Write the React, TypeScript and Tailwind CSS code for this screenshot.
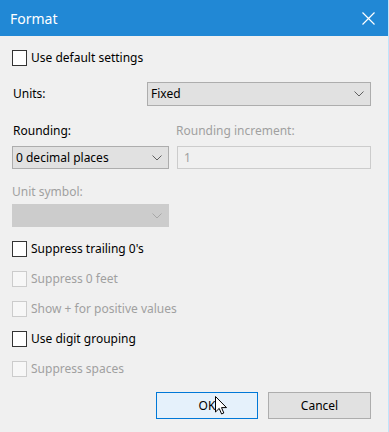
import React from "react";

const font = { fontFamily: '"Noto Sans", "Liberation Sans", sans-serif' };

function Check({ label, disabled }: { label: string; disabled?: boolean }) {
  return (
    <div className="flex items-center h-[16px]">
      <div
        className={
          "w-[15px] h-[16px] border shrink-0 " +
          (disabled ? "border-[#cccccc] bg-[#f7f7f7]" : "border-[#333333] bg-white")
        }
      />
      <span className={"ml-[4px] text-[12px] leading-[16px] " + (disabled ? "text-[#a0a0a0]" : "text-black")}>
        {label}
      </span>
    </div>
  );
}

function Chevron({ color }: { color: string }) {
  return (
    <svg width="10" height="6" viewBox="0 0 10 6" className="shrink-0">
      <path d="M0.5 0.5 L5 5 L9.5 0.5" fill="none" stroke={color} strokeWidth="1" />
    </svg>
  );
}

export default function App() {
  return (
    <div className="w-[389px] h-[432px] bg-[#f0f0f0] flex flex-col relative overflow-hidden border-r border-[#bfe3fb]" style={font}>
      <div className="h-[36px] bg-[#2188d5] flex items-center justify-between pl-[10px] pr-[13px] shrink-0">
        <span className="text-white text-[14px]">Format</span>
        <svg width="13" height="13" viewBox="0 0 13 13">
          <path d="M0.5 0.5 L12.5 12.5 M12.5 0.5 L0.5 12.5" stroke="white" strokeWidth="1.2" />
        </svg>
      </div>
      <div className="pl-[12px] pr-[17px] flex flex-col">
        <div className="mt-[14px]">
          <Check label="Use default settings" />
        </div>
        <div className="mt-[16px] flex items-center h-[24px]">
          <span className="text-[12px] text-black w-[135px] pl-[1px]">Units:</span>
          <div className="flex-1 h-[24px] bg-[#e1e1e1] border border-[#adadad] flex items-center justify-between pl-[3px] pr-[6px]">
            <span className="text-[12px] text-black">Fixed</span>
            <Chevron color="#606060" />
          </div>
        </div>
        <div className="mt-[17px] flex h-[16px] items-center">
          <span className="text-[12px] text-black w-[164px] pl-[1px]">Rounding:</span>
          <span className="text-[12px] text-[#a0a0a0]">Rounding increment:</span>
        </div>
        <div className="mt-[7px] flex h-[23px]">
          <div className="w-[157px] h-[23px] bg-[#e1e1e1] border border-[#adadad] flex items-center justify-between pl-[3px] pr-[6px]">
            <span className="text-[12px] text-black">0 decimal places</span>
            <Chevron color="#606060" />
          </div>
          <div className="ml-[8px] flex-1 h-[23px] border border-[#cccccc] bg-[#f0f0f0] flex items-center pl-[6px]">
            <span className="text-[12px] text-[#a0a0a0]">1</span>
          </div>
        </div>
        <div className="mt-[15px] h-[16px] flex items-center">
          <span className="text-[12px] text-[#a0a0a0]">Unit symbol:</span>
        </div>
        <div className="mt-[4px] w-[157px] h-[23px] bg-[#cccccc] border border-[#cccccc] flex items-center justify-end pr-[6px]">
          <Chevron color="#a8a8a8" />
        </div>
        <div className="mt-[14px] flex flex-col gap-[14px]">
          <Check label="Suppress trailing 0's" />
          <Check label="Suppress 0 feet" disabled />
          <Check label="Show + for positive values" disabled />
          <Check label="Use digit grouping" />
          <Check label="Suppress spaces" disabled />
        </div>
        <div className="mt-[15px] flex justify-end gap-[10px]">
          <div className="w-[102px] h-[27px] bg-[#e5f1fb] border border-[#0078d7] flex items-center justify-center text-[12px] text-black">
            OK
          </div>
          <div className="w-[103px] h-[27px] bg-[#e1e1e1] border border-[#adadad] flex items-center justify-center text-[12px] text-black">
            Cancel
          </div>
        </div>
      </div>
      <svg className="absolute left-[215px] top-[396px]" width="13" height="20" viewBox="0 0 13 20">
        <path
          d="M0.5 0.5 L0.5 16 L4.2 12.4 L6.6 18 L8.8 17 L6.5 11.6 L11.5 11.6 Z"
          fill="white"
          stroke="black"
          strokeWidth="1"
          strokeLinejoin="miter"
        />
      </svg>
    </div>
  );
}
